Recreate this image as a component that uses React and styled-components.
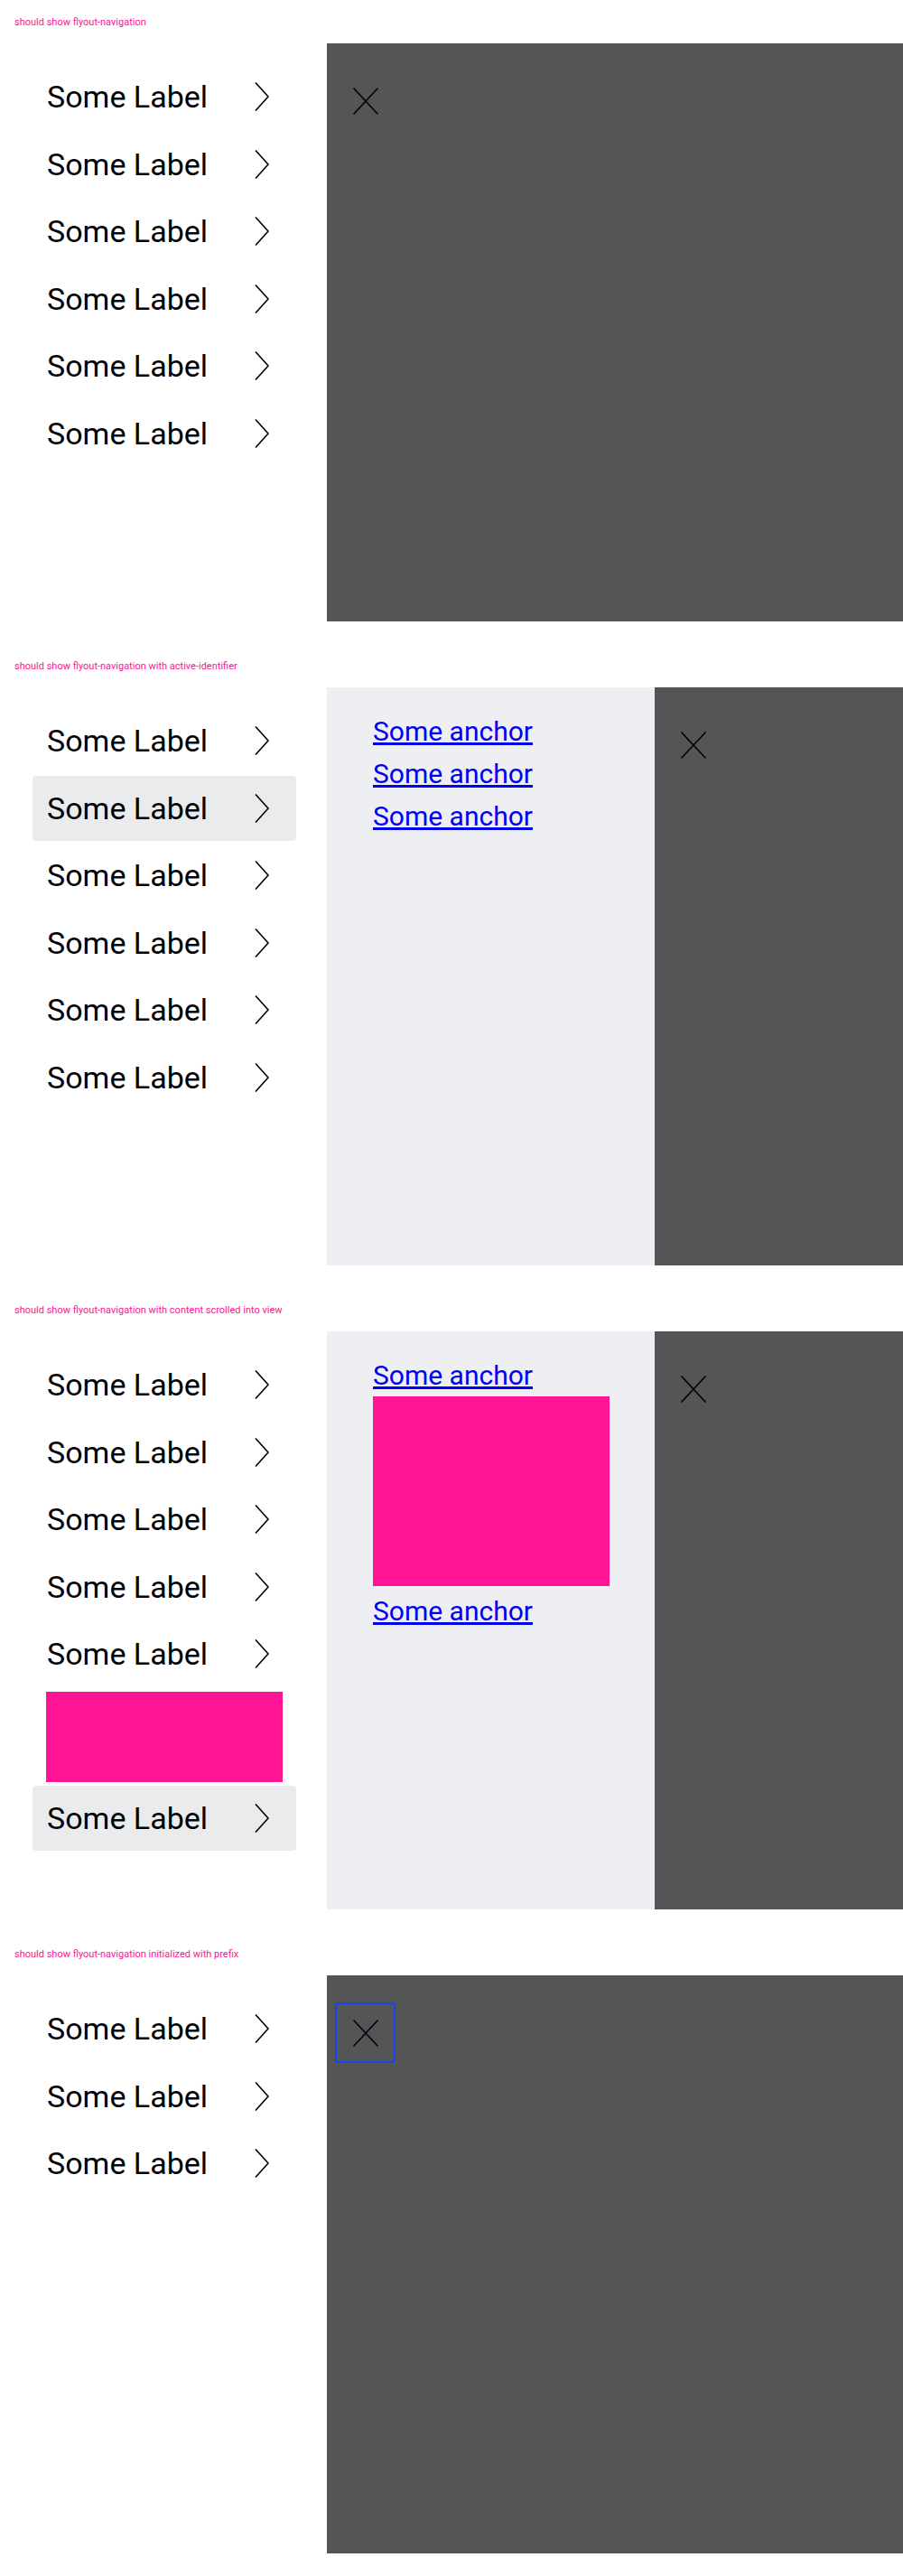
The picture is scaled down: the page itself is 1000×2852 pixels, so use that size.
import React from 'react';
import styled, { createGlobalStyle } from 'styled-components';

const GlobalStyle = createGlobalStyle`
  html, body {
    margin: 0;
    padding: 0;
    background: #fff;
  }
  body {
    font-family: Roboto, "Liberation Sans", sans-serif;
  }
`;

const Page = styled.div`
  width: 1000px;
`;

const Section = styled.section`
  padding-bottom: 25px;
`;

const Title = styled.p`
  margin: 0;
  height: 48px;
  display: flex;
  align-items: center;
  padding-left: 16px;
  font-size: 11px;
  color: #ff1493;
`;

const Stage = styled.div`
  display: flex;
  height: 640px;
`;

const Primary = styled.nav`
  width: 362px;
  flex-shrink: 0;
  box-sizing: border-box;
  padding: 23px 0 0 36px;
  display: flex;
  flex-direction: column;
  gap: 2.5px;
`;

const Item = styled.button`
  all: unset;
  box-sizing: border-box;
  width: 292px;
  height: 72px;
  flex-shrink: 0;
  display: flex;
  align-items: center;
  justify-content: space-between;
  padding: 0 22px 0 16px;
  border-radius: 4px;
  background: ${(p) => (p.$active ? '#eaebec' : 'transparent')};
  color: #010205;
  font-family: Roboto, "Liberation Sans", sans-serif;
  font-size: 34px;
  cursor: pointer;
`;

const Secondary = styled.div`
  width: 363px;
  flex-shrink: 0;
  box-sizing: border-box;
  background: #eeeff2;
  padding: 25px 0 0 51px;
  display: flex;
  flex-direction: column;
  align-items: flex-start;
`;

const Anchor = styled.a`
  font-family: Roboto, "Liberation Sans", sans-serif;
  font-size: 30px;
  line-height: 47px;
  color: #0000ee;
  text-decoration: underline;
`;

const Block = styled.div`
  flex-shrink: 0;
  background: #ff1493;
  width: 262px;
  height: ${(p) => p.$h}px;
  margin: ${(p) => p.$m};
`;

const Backdrop = styled.div`
  flex: 1;
  background: #545557;
`;

const CloseButton = styled.button`
  all: unset;
  box-sizing: border-box;
  width: 67px;
  height: 67px;
  margin: 30px 0 0 9px;
  display: flex;
  align-items: center;
  justify-content: center;
  border: 2px solid ${(p) => (p.$focus ? '#1a44ea' : 'transparent')};
  border-radius: 4px;
  cursor: pointer;
`;

function Chevron() {
  return (
    <svg width="32" height="32" viewBox="0 0 32 32" fill="none">
      <path d="M9 0.5 L23 16 L9 31.5" stroke="#010205" strokeWidth="1.6" />
    </svg>
  );
}

function Cross() {
  return (
    <svg width="32" height="32" viewBox="0 0 32 32" fill="none">
      <path d="M2.5 1.5 L29.5 30.5 M29.5 1.5 L2.5 30.5" stroke="#010205" strokeWidth="1.6" />
    </svg>
  );
}

function NavItem({ active }) {
  return (
    <Item $active={active}>
      Some Label
      <Chevron />
    </Item>
  );
}

export default function App() {
  return (
    <Page>
      <GlobalStyle />

      <Section>
        <Title>should show flyout-navigation</Title>
        <Stage>
          <Primary>
            {[0, 1, 2, 3, 4, 5].map((i) => <NavItem key={i} />)}
          </Primary>
          <Backdrop>
            <CloseButton aria-label="Close"><Cross /></CloseButton>
          </Backdrop>
        </Stage>
      </Section>

      <Section>
        <Title>should show flyout-navigation with active-identifier</Title>
        <Stage>
          <Primary>
            {[0, 1, 2, 3, 4, 5].map((i) => <NavItem key={i} active={i === 1} />)}
          </Primary>
          <Secondary>
            <Anchor href="#">Some anchor</Anchor>
            <Anchor href="#">Some anchor</Anchor>
            <Anchor href="#">Some anchor</Anchor>
          </Secondary>
          <Backdrop>
            <CloseButton aria-label="Close"><Cross /></CloseButton>
          </Backdrop>
        </Stage>
      </Section>

      <Section>
        <Title>should show flyout-navigation with content scrolled into view</Title>
        <Stage>
          <Primary>
            {[0, 1, 2, 3, 4].map((i) => <NavItem key={i} />)}
            <Block $h={100} $m="3.5px 0 1.5px 15px" />
            <NavItem active />
          </Primary>
          <Secondary>
            <Anchor href="#">Some anchor</Anchor>
            <Block $h={210} $m="0 0 4px 0" />
            <Anchor href="#">Some anchor</Anchor>
          </Secondary>
          <Backdrop>
            <CloseButton aria-label="Close"><Cross /></CloseButton>
          </Backdrop>
        </Stage>
      </Section>

      <Section>
        <Title>should show flyout-navigation initialized with prefix</Title>
        <Stage>
          <Primary>
            {[0, 1, 2].map((i) => <NavItem key={i} />)}
          </Primary>
          <Backdrop>
            <CloseButton aria-label="Close" $focus><Cross /></CloseButton>
          </Backdrop>
        </Stage>
      </Section>
    </Page>
  );
}
